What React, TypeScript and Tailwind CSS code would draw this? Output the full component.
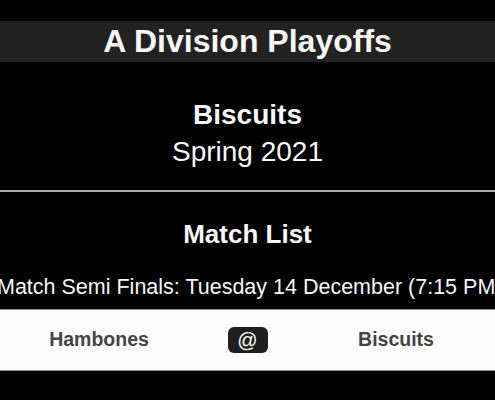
import React from 'react';

const font = { fontFamily: '"Liberation Sans", Arial, sans-serif' };

function Header() {
  return (
    <div className="mt-[21px] h-[41px] bg-[#222] flex items-center justify-center">
      <h1 className="text-[32px] leading-[41px] font-bold text-[#f8f8f8]">A Division Playoffs</h1>
    </div>
  );
}

function MatchRow({ home, away }: { home: string; away: string }) {
  return (
    <div className="mt-[8px] h-[62px] bg-[#fdfdfd] border-y border-[#888] grid grid-cols-[2fr_1fr_2fr] items-center">
      <div className="text-center text-[19.5px] font-bold text-[#444]">{home}</div>
      <div className="flex justify-center">
        <span className="w-[40px] h-[26px] rounded-[6px] bg-[#1e1e1e] text-white text-[20px] leading-[26px] text-center">@</span>
      </div>
      <div className="text-center text-[19.5px] font-bold text-[#444]">{away}</div>
    </div>
  );
}

export default function App() {
  return (
    <div className="w-[495px] h-[400px] bg-black overflow-hidden" style={font}>
      <Header />
      <div className="pt-[34px] text-center text-[#f8f8f8]">
        <div className="text-[28px] leading-[37px] font-bold">Biscuits</div>
        <div className="text-[28px] leading-[37px]">Spring 2021</div>
      </div>
      <div className="mt-[20px] border-t-2 border-[#aaa]" />
      <div className="mt-[26px] text-center text-[26px] leading-[32px] font-bold text-[#f8f8f8]">Match List</div>
      {/* the line is wider than the page, so it starts at the left edge and runs off the right */}
      <div className="mt-[23px] -ml-[3px] text-center whitespace-nowrap text-[21.5px] leading-[28px] text-[#f8f8f8]">
        Match Semi Finals: Tuesday 14 December (7:15 PM)
      </div>
      <MatchRow home="Hambones" away="Biscuits" />
    </div>
  );
}
